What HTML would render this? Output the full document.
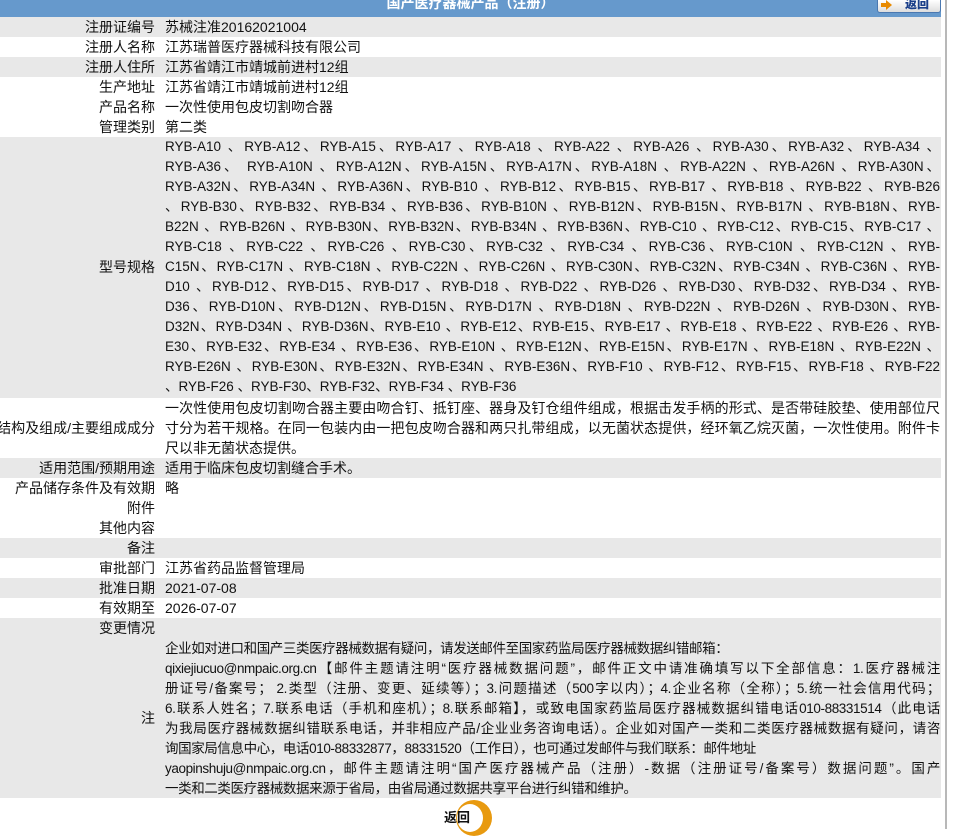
<!DOCTYPE html>
<html><head><meta charset="utf-8"><style>
*{margin:0;padding:0;box-sizing:border-box}
body{width:956px;height:829px;overflow:hidden;background:#fff;font-family:"Liberation Sans","Noto Sans CJK SC",sans-serif;font-size:14px;color:#111;position:relative}
.hdr{position:absolute;left:0;top:0;width:941px;height:17px;background:#6699cc;overflow:hidden}
.hdr span{position:absolute;left:0;width:941px;text-align:center;top:-7px;color:#fff;font-weight:bold;font-size:14px}
.btn{position:absolute;left:877px;top:0;width:64px;height:13px;border:1px solid #4a78b0;border-top:none;border-radius:0 0 3px 3px;background:linear-gradient(#fff,#ddd);font-size:12px;font-weight:bold;color:#1a3f8a;line-height:9px;overflow:hidden}
.btn i{position:absolute;left:8px;top:0;width:0;height:0;border-left:6px solid #e88a00;border-top:5px solid transparent;border-bottom:5px solid transparent}
.btn i:before{content:"";position:absolute;left:-11px;top:-2px;width:5px;height:4px;background:#e88a00}
.btn b{position:absolute;left:27px;top:0}
.vl{position:absolute;left:945px;top:0;width:2px;height:829px;background:#b8b8b8}
.r{position:absolute;left:0;width:941px}
.g{background:#e8e8e8}
.l{position:absolute;right:786px;white-space:nowrap;line-height:20px}
.v{position:absolute;left:165px;width:775px;line-height:20px}
.j div{text-align:justify;text-align-last:justify;white-space:nowrap;height:20px}
.j div.last{text-align-last:left}
.m{font-size:13.5px}
.n{font-size:13.5px;line-height:20px;letter-spacing:-0.4px}
.n div{text-align:justify;text-align-last:justify;white-space:nowrap;height:20px;overflow:hidden}
.n div.last{text-align-last:left}
</style></head><body>
<div class="hdr"><span>国产医疗器械产品（注册）</span></div>
<div class="btn"><i></i><b>返回</b></div>
<div class="vl"></div>

<div class="r g" style="top:17px;height:20px"><div class="l">注册证编号</div><div class="v">苏械注准20162021004</div></div>
<div class="r" style="top:37px;height:20px"><div class="l">注册人名称</div><div class="v">江苏瑞普医疗器械科技有限公司</div></div>
<div class="r g" style="top:57px;height:20px"><div class="l">注册人住所</div><div class="v">江苏省靖江市靖城前进村12组</div></div>
<div class="r" style="top:77px;height:20px"><div class="l">生产地址</div><div class="v">江苏省靖江市靖城前进村12组</div></div>
<div class="r" style="top:97px;height:20px"><div class="l">产品名称</div><div class="v">一次性使用包皮切割吻合器</div></div>
<div class="r" style="top:117px;height:20px"><div class="l">管理类别</div><div class="v">第二类</div></div>
<div class="r g" style="top:137px;height:261px"><div class="l" style="top:120px">型号规格</div><div class="v j m">
<div>RYB-A10 、RYB-A12、RYB-A15、RYB-A17 、RYB-A18 、RYB-A22 、RYB-A26 、RYB-A30、RYB-A32、RYB-A34 、</div>
<div>RYB-A36、 RYB-A10N 、RYB-A12N、RYB-A15N、RYB-A17N、RYB-A18N 、RYB-A22N 、RYB-A26N 、RYB-A30N、</div>
<div>RYB-A32N、RYB-A34N 、RYB-A36N、RYB-B10 、RYB-B12、RYB-B15、RYB-B17 、RYB-B18 、RYB-B22 、RYB-B26</div>
<div>、RYB-B30、RYB-B32、RYB-B34 、RYB-B36、RYB-B10N 、RYB-B12N、RYB-B15N、RYB-B17N 、RYB-B18N、RYB-</div>
<div>B22N 、RYB-B26N 、RYB-B30N、RYB-B32N、RYB-B34N 、RYB-B36N、RYB-C10 、RYB-C12、RYB-C15、RYB-C17 、</div>
<div>RYB-C18 、RYB-C22 、RYB-C26 、RYB-C30、RYB-C32 、RYB-C34 、RYB-C36、RYB-C10N 、RYB-C12N 、RYB-</div>
<div>C15N、RYB-C17N 、RYB-C18N 、RYB-C22N 、RYB-C26N 、RYB-C30N、RYB-C32N、RYB-C34N 、RYB-C36N 、RYB-</div>
<div>D10 、RYB-D12、RYB-D15、RYB-D17 、RYB-D18 、RYB-D22 、RYB-D26 、RYB-D30、RYB-D32、RYB-D34 、RYB-</div>
<div>D36、RYB-D10N、RYB-D12N、RYB-D15N、RYB-D17N 、RYB-D18N 、RYB-D22N 、RYB-D26N 、RYB-D30N、RYB-</div>
<div>D32N、RYB-D34N 、RYB-D36N、RYB-E10 、RYB-E12、RYB-E15、RYB-E17 、RYB-E18 、RYB-E22 、RYB-E26 、RYB-</div>
<div>E30、RYB-E32、RYB-E34 、RYB-E36、RYB-E10N 、RYB-E12N、RYB-E15N、RYB-E17N 、RYB-E18N 、RYB-E22N 、</div>
<div>RYB-E26N 、RYB-E30N、RYB-E32N、RYB-E34N 、RYB-E36N、RYB-F10 、RYB-F12、RYB-F15、RYB-F18 、RYB-F22</div>
<div class="last">、RYB-F26 、RYB-F30、RYB-F32、RYB-F34 、RYB-F36</div>
</div></div>
<div class="r" style="top:398px;height:60px"><div class="l" style="top:20px">结构及组成/主要组成成分</div><div class="v j">
<div>一次性使用包皮切割吻合器主要由吻合钉、抵钉座、器身及钉仓组件组成，根据击发手柄的形式、是否带硅胶垫、使用部位尺</div>
<div>寸分为若干规格。在同一包装内由一把包皮吻合器和两只扎带组成，以无菌状态提供，经环氧乙烷灭菌，一次性使用。附件卡</div>
<div class="last">尺以非无菌状态提供。</div>
</div></div>
<div class="r g" style="top:458px;height:20px"><div class="l">适用范围/预期用途</div><div class="v">适用于临床包皮切割缝合手术。</div></div>
<div class="r" style="top:478px;height:20px"><div class="l">产品储存条件及有效期</div><div class="v">略</div></div>
<div class="r" style="top:498px;height:20px"><div class="l">附件</div></div>
<div class="r" style="top:518px;height:20px"><div class="l">其他内容</div></div>
<div class="r g" style="top:538px;height:20px"><div class="l">备注</div></div>
<div class="r" style="top:558px;height:20px"><div class="l">审批部门</div><div class="v">江苏省药品监督管理局</div></div>
<div class="r g" style="top:578px;height:20px"><div class="l">批准日期</div><div class="v">2021-07-08</div></div>
<div class="r" style="top:598px;height:20px"><div class="l">有效期至</div><div class="v">2026-07-07</div></div>
<div class="r g" style="top:618px;height:180px"><div class="l">变更情况</div><div class="l" style="top:90px">注</div>
<div class="v n" style="top:21px">
<div class="last">企业如对进口和国产三类医疗器械数据有疑问，请发送邮件至国家药监局医疗器械数据纠错邮箱：</div>
<div>qixiejiucuo@nmpaic.org.cn【邮件主题请注明“医疗器械数据问题”，邮件正文中请准确填写以下全部信息：1.医疗器械注</div>
<div>册证号/备案号； 2.类型（注册、变更、延续等）；3.问题描述（500字以内）；4.企业名称（全称）；5.统一社会信用代码；</div>
<div>6.联系人姓名；7.联系电话（手机和座机）；8.联系邮箱】，或致电国家药监局医疗器械数据纠错电话010-88331514（此电话</div>
<div>为我局医疗器械数据纠错联系电话，并非相应产品/企业业务咨询电话）。企业如对国产一类和二类医疗器械数据有疑问，请咨</div>
<div class="last">询国家局信息中心，电话010-88332877，88331520（工作日），也可通过发邮件与我们联系：邮件地址</div>
<div>yaopinshuju@nmpaic.org.cn，邮件主题请注明“国产医疗器械产品（注册）-数据（注册证号/备案号）数据问题”。国产</div>
<div class="last">一类和二类医疗器械数据来源于省局，由省局通过数据共享平台进行纠错和维护。</div>
</div></div>

<div style="position:absolute;left:456px;top:800px;width:36px;height:36px;border-radius:50%;background:#e89a10"></div>
<div style="position:absolute;left:457px;top:804px;width:26px;height:28px;border-radius:50%;background:#fff"></div>
<div style="position:absolute;left:444px;top:807px;font-weight:bold;font-size:13px;color:#111">返回</div>
</body></html>
